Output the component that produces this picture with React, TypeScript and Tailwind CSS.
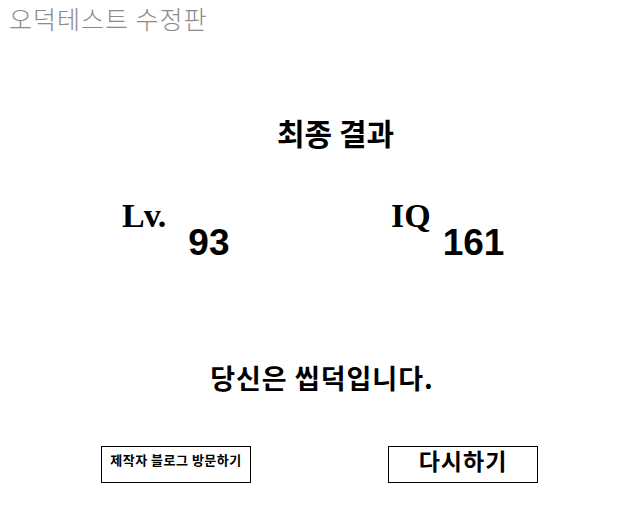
export default function App() {
  const kr = { fontFamily: '"Noto Sans CJK KR", "Noto Sans", sans-serif' }
  const serif = { fontFamily: '"Liberation Serif", serif' }
  const sans = { fontFamily: '"Liberation Sans", Arial, sans-serif' }

  return (
    <div className="w-[641px] h-[516px] bg-white relative overflow-hidden" style={kr}>
      {/* header */}
      <div className="pl-[9px] pt-[2px] text-[25px] leading-[32px] text-[#8a8a8a] font-light tracking-[1px]">
        오덕테스트 수정판
      </div>

      {/* title */}
      <div className="mt-[78px] flex justify-center pl-[30px]">
        <h1 className="text-[30px] leading-[40px] font-bold text-black">최종 결과</h1>
      </div>

      {/* scores */}
      <div className="mt-[44px] flex pl-[122px]">
        <div className="flex items-start w-[269px]">
          <span className="text-[34px] leading-[40px] font-bold text-black tracking-[-1px]" style={serif}>
            Lv.
          </span>
          <span className="ml-[23px] mt-[27px] text-[37px] leading-[40px] font-bold text-black" style={sans}>
            93
          </span>
        </div>
        <div className="flex items-start">
          <span className="text-[34px] leading-[40px] font-bold text-black" style={serif}>
            IQ
          </span>
          <span className="ml-[12px] mt-[27px] text-[37px] leading-[40px] font-bold text-black" style={sans}>
            161
          </span>
        </div>
      </div>

      {/* result */}
      <div className="mt-[95px] flex justify-center pl-[3px]">
        <p className="text-[27px] leading-[40px] font-bold text-black tracking-[1px]">당신은 씹덕입니다.</p>
      </div>

      {/* buttons */}
      <div className="mt-[48px] flex pl-[101px] gap-[137px]">
        <button className="w-[150px] h-[37px] border border-black bg-white flex justify-center pt-[3px] text-[13px] leading-[20px] font-bold text-black tracking-[0.5px]">
          제작자 블로그 방문하기
        </button>
        <button className="w-[150px] h-[37px] border border-black bg-white flex justify-center pt-[0px] text-[23px] leading-[26px] font-bold text-black tracking-[1px]">
          다시하기
        </button>
      </div>
    </div>
  )
}
